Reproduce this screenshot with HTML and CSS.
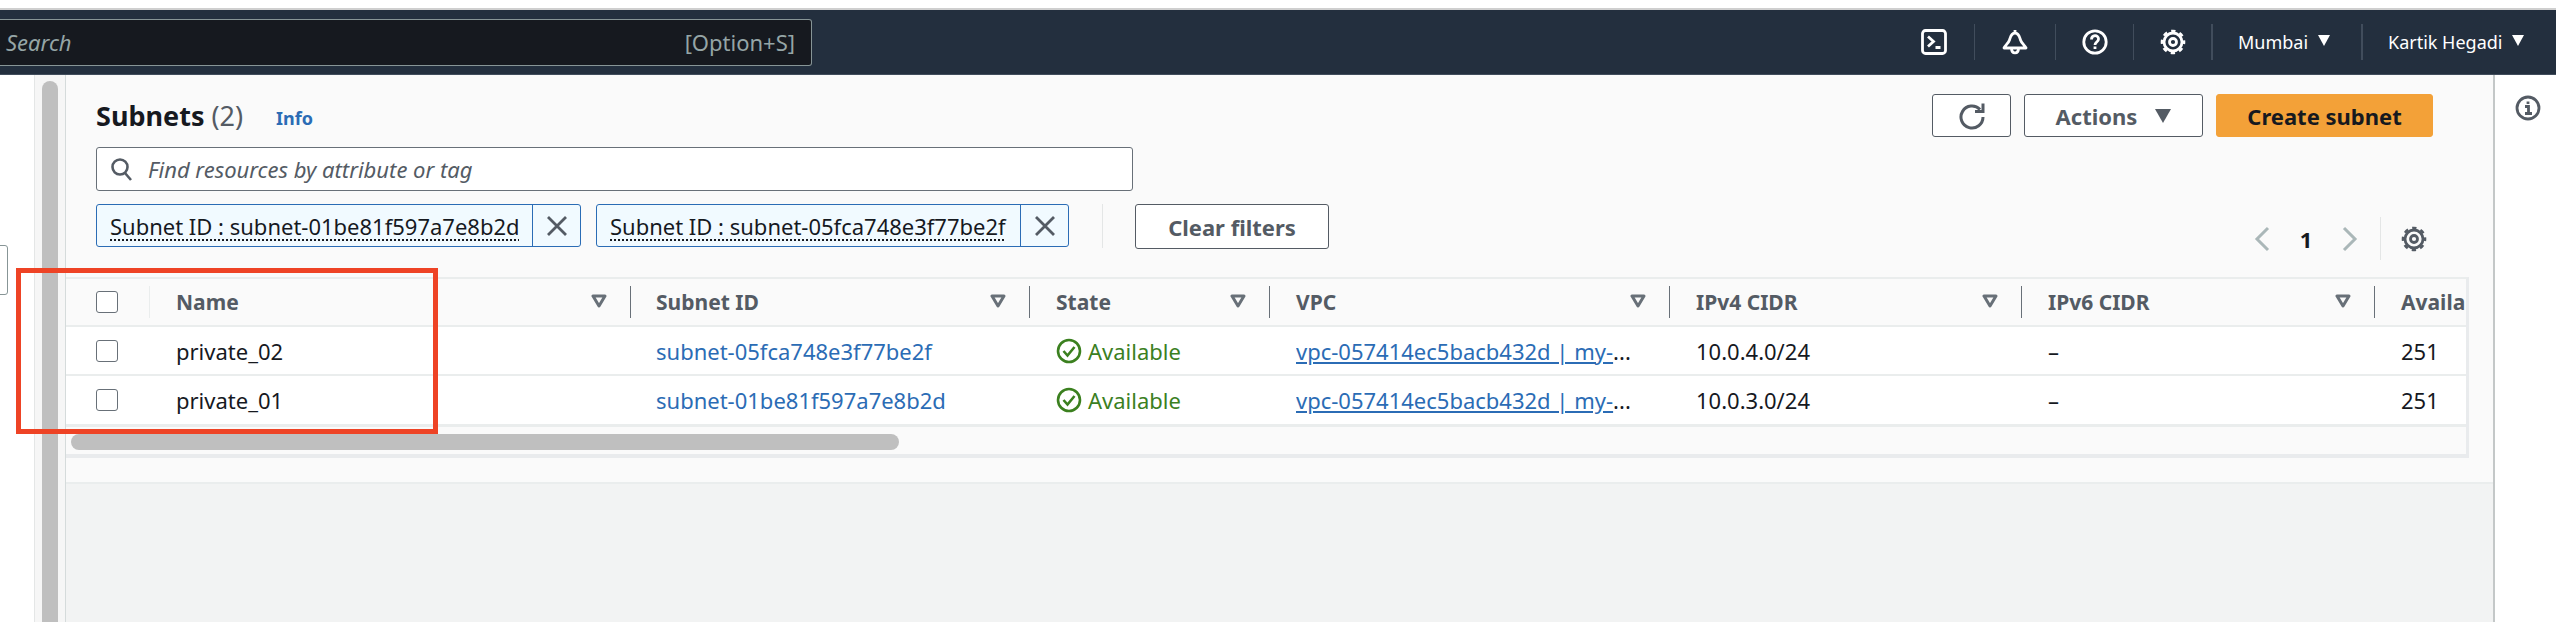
FILE: index.html
```html
<!DOCTYPE html>
<html lang="en">
<head>
    <meta charset="UTF-8">
    <title>Subnets</title>
    <link rel="stylesheet" href="styles.css">
</head>
<body>
    <div class="topStrip"></div>
    <header class="navBar">
        <div class="navSearch">
            <span class="navSearchText">Search</span>
            <span class="navSearchKey">[Option+S]</span>
        </div>
        <div class="navItems">
            <div class="navCell navCellFirst">
                <svg width="26" height="26" viewBox="0 0 26 26" fill="none" stroke="#fff" stroke-width="2.800"><rect x="1.500" y="1.500" width="23" height="23" rx="3"/><path d="M7 7.500l5.500 5-5.500 5M14.500 18.500h5"/></svg>
            </div>
            <div class="navCell navCellLine navCellBell">
                <svg width="26" height="26" viewBox="0 0 26 26" fill="none" stroke="#fff" stroke-width="2.800" stroke-linejoin="round"><path d="M13 1v3M13 4C9 4 8.500 8 7.500 11 6.500 14 3.500 16 2 19h22c-1.500-3-4.500-5-5.500-8C17.500 8 17 4 13 4z"/><path d="M9.500 19c0 6.500 7 6.500 7 0"/></svg>
            </div>
            <div class="navCell navCellLine">
                <svg width="26" height="26" viewBox="0 0 26 26" fill="none" stroke="#fff" stroke-width="2.800"><circle cx="13" cy="13" r="11.200"/><path d="M9.500 10.500c0-5 7-5 7-.5 0 3-3.500 3-3.500 6M13 17.500v2.500"/></svg>
            </div>
            <div class="navCell navCellLine">
                <svg width="26" height="26" viewBox="0 0 26 26" fill="none" stroke="#fff"><circle cx="13" cy="13" r="9" stroke-width="2.800"/><circle cx="13" cy="13" r="11" stroke-width="2.600" stroke-dasharray="4.300 4.340" stroke-dashoffset="2.150"/><circle cx="13" cy="13" r="3.500" stroke-width="2.800"/></svg>
            </div>
            <div class="navMenu navMenuCity">Mumbai <span class="navCaret"></span></div>
            <div class="navMenu">Kartik Hegadi <span class="navCaret"></span></div>
        </div>
    </header>

    <div class="pageBody">
        <div class="gutter">
            <div class="gutterThumb"></div>
        </div>
        <div class="sideTab"></div>

        <main class="mainArea">
            <section class="panel">
                <div class="panelHead">
                    <div class="titleRow">
                        <h1 class="pageTitle">Subnets <span class="pageCount">(2)</span></h1>
                        <a class="infoLink">Info</a>
                        <div class="titleActions">
                            <button class="btn btnRefresh">
                                <svg width="28" height="28" viewBox="0 0 28 28" fill="none" stroke="#545b64" stroke-width="3"><path d="M22 7.500a11 11 0 1 0 3 7.500"/><path d="M25 1.500v8h-8"/></svg>
                            </button>
                            <button class="btn btnActions">Actions <span class="btnCaret"></span></button>
                            <button class="btn btnCreate">Create subnet</button>
                        </div>
                    </div>
                    <div class="findBox">
                        <svg width="24" height="26" viewBox="0 0 24 26" fill="none" stroke="#545b64" stroke-width="2.600"><circle cx="10" cy="11" r="7.500"/><path d="M15 17l6 7"/></svg>
                        <span class="findText">Find resources by attribute or tag</span>
                    </div>
                    <div class="filterRow">
                        <div class="token">
                            <span class="tokenText">Subnet ID : subnet-01be81f597a7e8b2d</span>
                            <span class="tokenClose">
                                <svg width="22" height="22" viewBox="0 0 22 22" fill="none" stroke="#545b64" stroke-width="2.800"><path d="M2 2l18 18M20 2L2 20"/></svg>
                            </span>
                        </div>
                        <div class="token tokenSecond">
                            <span class="tokenText">Subnet ID : subnet-05fca748e3f77be2f</span>
                            <span class="tokenClose">
                                <svg width="22" height="22" viewBox="0 0 22 22" fill="none" stroke="#545b64" stroke-width="2.800"><path d="M2 2l18 18M20 2L2 20"/></svg>
                            </span>
                        </div>
                        <div class="filterLine"></div>
                        <button class="btn btnClear">Clear filters</button>
                        <div class="pager">
                            <svg width="18" height="26" viewBox="0 0 18 26" fill="none" stroke="#aab7b8" stroke-width="3"><path d="M15 2L4 13l11 11"/></svg>
                            <span class="pagerNum">1</span>
                            <svg width="18" height="26" viewBox="0 0 18 26" fill="none" stroke="#aab7b8" stroke-width="3"><path d="M3 2l11 11L3 24"/></svg>
                            <span class="pagerGear">
                                <svg width="26" height="26" viewBox="0 0 26 26" fill="none" stroke="#545b64"><circle cx="13" cy="13" r="9" stroke-width="2.800"/><circle cx="13" cy="13" r="11" stroke-width="2.600" stroke-dasharray="4.300 4.340" stroke-dashoffset="2.150"/><circle cx="13" cy="13" r="3.500" stroke-width="2.800"/></svg>
                            </span>
                        </div>
                    </div>
                </div>

                <div class="tableBox">
                    <div class="tableClip">
                        <table class="subnetTable">
                            <colgroup>
                                <col class="colCheck"><col class="colName"><col class="colSubnet"><col class="colState">
                                <col class="colVpc"><col class="colCidr4"><col class="colCidr6"><col class="colAvail">
                            </colgroup>
                            <thead>
                                <tr>
                                    <th><div class="thInner thCheck"><span class="checkBox"></span></div></th>
                                    <th><div class="thInner">Name<svg class="sortIcon" width="16" height="15" viewBox="0 0 16 15" fill="none" stroke="#687078" stroke-width="3"><path d="M2 2h12l-6 10z" stroke-linejoin="round"/></svg></div></th>
                                    <th><div class="thInner">Subnet ID<svg class="sortIcon" width="16" height="15" viewBox="0 0 16 15" fill="none" stroke="#687078" stroke-width="3"><path d="M2 2h12l-6 10z" stroke-linejoin="round"/></svg></div></th>
                                    <th><div class="thInner">State<svg class="sortIcon" width="16" height="15" viewBox="0 0 16 15" fill="none" stroke="#687078" stroke-width="3"><path d="M2 2h12l-6 10z" stroke-linejoin="round"/></svg></div></th>
                                    <th><div class="thInner">VPC<svg class="sortIcon" width="16" height="15" viewBox="0 0 16 15" fill="none" stroke="#687078" stroke-width="3"><path d="M2 2h12l-6 10z" stroke-linejoin="round"/></svg></div></th>
                                    <th><div class="thInner">IPv4 CIDR<svg class="sortIcon" width="16" height="15" viewBox="0 0 16 15" fill="none" stroke="#687078" stroke-width="3"><path d="M2 2h12l-6 10z" stroke-linejoin="round"/></svg></div></th>
                                    <th><div class="thInner">IPv6 CIDR<svg class="sortIcon" width="16" height="15" viewBox="0 0 16 15" fill="none" stroke="#687078" stroke-width="3"><path d="M2 2h12l-6 10z" stroke-linejoin="round"/></svg></div></th>
                                    <th><div class="thInner thLast">Available IPv4 addresses</div></th>
                                </tr>
                            </thead>
                            <tbody>
                                <tr>
                                    <td class="tdCheck"><span class="checkBox"></span></td>
                                    <td>private_02</td>
                                    <td><a class="tblLink">subnet-05fca748e3f77be2f</a></td>
                                    <td>
                                        <span class="stateOk">
                                            <svg width="26" height="26" viewBox="0 0 26 26" fill="none" stroke="#3b801f" stroke-width="2.600"><circle cx="13" cy="13" r="11"/><path d="M7.500 13l4 4.500 7-8.500"/></svg>
                                            Available
                                        </span>
                                    </td>
                                    <td><div class="vpcCell"><a class="tblLink vpcLink">vpc-057414ec5bacb432d | my-</a>...</div></td>
                                    <td>10.0.4.0/24</td>
                                    <td>–</td>
                                    <td>251</td>
                                </tr>
                                <tr class="rowLast">
                                    <td class="tdCheck"><span class="checkBox"></span></td>
                                    <td>private_01</td>
                                    <td><a class="tblLink">subnet-01be81f597a7e8b2d</a></td>
                                    <td>
                                        <span class="stateOk">
                                            <svg width="26" height="26" viewBox="0 0 26 26" fill="none" stroke="#3b801f" stroke-width="2.600"><circle cx="13" cy="13" r="11"/><path d="M7.500 13l4 4.500 7-8.500"/></svg>
                                            Available
                                        </span>
                                    </td>
                                    <td><div class="vpcCell"><a class="tblLink vpcLink">vpc-057414ec5bacb432d | my-</a>...</div></td>
                                    <td>10.0.3.0/24</td>
                                    <td>–</td>
                                    <td>251</td>
                                </tr>
                            </tbody>
                        </table>
                    </div>
                    <div class="tableScroll">
                        <div class="tableThumb"></div>
                    </div>
                </div>
            </section>
        </main>

        <aside class="helpRail">
            <svg width="26" height="26" viewBox="0 0 26 26" fill="none" stroke="#545b64" stroke-width="2.800"><circle cx="13" cy="13" r="11"/><path d="M10 11.500h3.500v7M10 18.500h7"/><path d="M13 6.500v2.500"/></svg>
        </aside>

        <div class="redBox"></div>
    </div>
</body>
</html>
```

FILE: styles.css
```css
* {
    box-sizing: border-box;
}
html, body {
    margin: 0;
    height: 100%;
    overflow: hidden;
}
body {
    display: flex;
    flex-direction: column;
    background-color: white;
    font-family: "Noto Sans", "Open Sans", sans-serif;
    font-size: 22px;
    color: #16191f;
}

/* top nav */
.topStrip {
    height: 10px;
    flex-shrink: 0;
    background-color: white;
    border-bottom: 2px solid #cfcfcf;
}
.navBar {
    height: 65px;
    flex-shrink: 0;
    background-color: #232f3e;
    border-bottom: 1px solid #414d5c;
    display: flex;
    align-items: center;
    justify-content: space-between;
}
.navSearch {
    width: 812px;
    height: 47px;
    background-color: #16191f;
    border: 1px solid #879596;
    border-left: none;
    border-radius: 0 3px 3px 0;
    display: flex;
    align-items: center;
    justify-content: space-between;
    padding: 0 16px 0 6px;
    color: #95a5a6;
}
.navSearchText {
    font-style: italic;
}
.navItems {
    display: flex;
    align-items: center;
    color: white;
}
.navCell {
    width: 78px;
    height: 36px;
    display: flex;
    align-items: center;
    justify-content: center;
}
.navCellFirst {
    width: 80px;
}
.navCellBell {
    width: 81px;
}
.navCellLine {
    border-left: 1px solid #414d5c;
}
.navMenu {
    height: 36px;
    width: 195px;
    padding-left: 25px;
    border-left: 2px solid #414d5c;
    display: flex;
    align-items: center;
    gap: 10px;
    font-size: 18px;
}
.navMenuCity {
    width: 150px;
}
.navCaret {
    width: 0;
    height: 0;
    border-left: 6px solid transparent;
    border-right: 6px solid transparent;
    border-top: 11px solid white;
    margin-top: -3px;
}

/* page */
.pageBody {
    flex: 1;
    display: flex;
    position: relative;
    min-height: 0;
}
.gutter {
    width: 65px;
    flex-shrink: 0;
    padding: 6px 7px 0 42px;
    background: linear-gradient(to right, white 34px, #e4e6e6 34px, #e4e6e6 35px, #f6f6f6 35px);
}
.gutterThumb {
    width: 16px;
    height: 100%;
    background-color: #bfbfbf;
    border-radius: 8px 8px 0 0;
}
.sideTab {
    position: absolute;
    left: -8px;
    top: 170px;
    width: 16px;
    height: 50px;
    background-color: white;
    border: 1px solid #879596;
    border-radius: 3px;
}
.mainArea {
    width: 2430px;
    flex-shrink: 0;
    background-color: #f2f3f3;
    border-left: 1px solid #d5dbdb;
    border-right: 2px solid #c4c8c8;
}
.panel {
    height: 409px;
    background-color: #fafafa;
    border-bottom: 2px solid #eaeded;
}
.panelHead {
    height: 202px;
    padding: 19px 60px 0 30px;
}
.titleRow {
    display: flex;
    align-items: flex-start;
    height: 43px;
}
.pageTitle {
    margin: 0;
    font-size: 27px;
    font-weight: bold;
    line-height: 43px;
}
.pageCount {
    font-weight: normal;
    color: #545b64;
}
.infoLink {
    margin-left: 33px;
    font-size: 18px;
    font-weight: bold;
    line-height: 49px;
    color: #2b6cb5;
}
.titleActions {
    margin-left: auto;
    display: flex;
    gap: 13px;
}
.btn {
    height: 43px;
    background-color: white;
    border: 1px solid #545b64;
    border-radius: 3px;
    font-family: inherit;
    font-size: 22px;
    font-weight: bold;
    color: #545b64;
    display: flex;
    align-items: center;
    justify-content: center;
    padding: 0;
}
.btnRefresh {
    width: 79px;
}
.btnActions {
    width: 179px;
    gap: 18px;
}
.btnCaret {
    width: 0;
    height: 0;
    border-left: 8px solid transparent;
    border-right: 8px solid transparent;
    border-top: 14px solid #545b64;
}
.btnCreate {
    width: 217px;
    background-color: #f3a138;
    border-color: #f3a138;
    color: #16191f;
}
.findBox {
    width: 1037px;
    height: 44px;
    margin-top: 10px;
    background-color: white;
    border: 1px solid #687078;
    border-radius: 3px;
    display: flex;
    align-items: center;
    gap: 14px;
    padding-left: 13px;
}
.findText {
    font-style: italic;
    color: #545b64;
}
.filterRow {
    display: flex;
    align-items: flex-start;
    margin-top: 13px;
}
.token {
    width: 485px;
    height: 43px;
    display: flex;
    background-color: #f1faff;
    border: 1px solid #2b6cb5;
    border-radius: 3px;
}
.tokenSecond {
    width: 473px;
    margin-left: 15px;
}
.tokenText {
    flex: 1;
    padding: 6px 0 0 13px;
    white-space: nowrap;
    overflow: hidden;
    text-decoration: underline dotted;
    text-underline-offset: 4px;
}
.tokenClose {
    width: 48px;
    flex-shrink: 0;
    border-left: 1px solid #2b6cb5;
    display: flex;
    align-items: center;
    justify-content: center;
}
.filterLine {
    width: 1px;
    height: 44px;
    margin: 0 32px 0 33px;
    background-color: #e4e6e6;
}
.btnClear {
    width: 194px;
    height: 45px;
}
.pager {
    margin-left: auto;
    margin-right: 6px;
    margin-top: 13px;
    height: 43px;
    display: flex;
    align-items: center;
}
.pagerNum {
    width: 70px;
    text-align: center;
    font-weight: bold;
}
.pagerGear {
    margin-left: 21px;
    padding-left: 20px;
    height: 43px;
    border-left: 1px solid #e4e6e6;
    display: flex;
    align-items: center;
}

/* table */
.tableBox {
    width: 2403px;
    height: 181px;
    border-top: 2px solid #eaeded;
    border-right: 3px solid #e9ebed;
    border-bottom: 4px solid #e9ebed;
}
.tableClip {
    height: 148px;
    overflow: hidden;
}
.subnetTable {
    width: 2600px;
    table-layout: fixed;
    border-collapse: separate;
    border-spacing: 0;
}
.colCheck { width: 84px; }
.colName { width: 481px; }
.colSubnet { width: 399px; }
.colState { width: 240px; }
.colVpc { width: 400px; }
.colCidr4 { width: 352px; }
.colCidr6 { width: 353px; }
.colAvail { width: 291px; }
th {
    height: 48px;
    padding: 0;
    text-align: left;
    font-size: 21px;
    font-weight: bold;
    color: #545b64;
    border-bottom: 2px solid #eaeded;
}
.thInner {
    height: 32px;
    padding-left: 26px;
    border-right: 1px solid #687078;
    display: flex;
    align-items: center;
    white-space: nowrap;
}
th:nth-child(3) .thInner, td:nth-child(3) {
    padding-left: 25px;
}
.thCheck {
    border-right-color: #eaeded;
    padding-left: 30px;
}
.thLast {
    border-right: none;
}
.sortIcon {
    margin-left: auto;
    margin-right: 23px;
    margin-top: -2px;
}
td {
    height: 49px;
    padding: 0 0 0 26px;
    background-color: white;
    border-bottom: 2px solid #eaeded;
    white-space: nowrap;
}
.rowLast td {
    height: 51px;
    border-bottom-width: 3px;
}
td.tdCheck {
    padding-left: 30px;
}
.checkBox {
    display: block;
    width: 22px;
    height: 22px;
    background-color: white;
    border: 1px solid #687078;
    border-radius: 3px;
}
.tblLink {
    color: #2b6cb5;
}
.stateOk {
    display: flex;
    align-items: center;
    gap: 6px;
    color: #3b801f;
}
.vpcCell {
    width: 345px;
    overflow: hidden;
}
.vpcLink {
    text-decoration: underline;
}
.tableScroll {
    height: 27px;
    padding: 7px 0 0 5px;
    background-color: #fafafa;
}
.tableThumb {
    width: 828px;
    height: 16px;
    background-color: #bfbfbf;
    border-radius: 8px;
}

.helpRail {
    flex: 1;
    background-color: white;
    padding: 20px 0 0 20px;
}
.redBox {
    position: absolute;
    left: 16px;
    top: 193px;
    width: 422px;
    height: 166px;
    border: 5px solid #ee4325;
}
```
